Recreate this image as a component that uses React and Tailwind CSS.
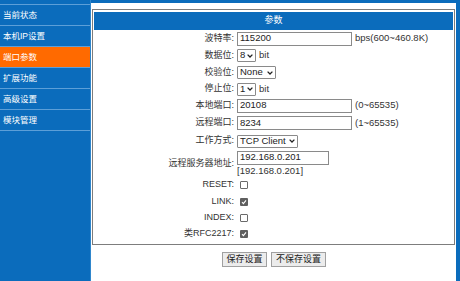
import React from 'react'

const NAV = ['当前状态', '本机IP设置', '端口参数', '扩展功能', '高级设置', '模块管理']

function Chevron() {
  return (
    <svg width="6" height="4" viewBox="0 0 6 4" className="shrink-0">
      <path d="M0.6 0.6 L3 3 L5.4 0.6" fill="none" stroke="#222" strokeWidth="1.3" />
    </svg>
  )
}

function Select({ value, w }) {
  return (
    <div className={`${w} h-[13px] border border-[#8a8a8a] rounded-[1px] bg-white flex items-center justify-between pl-[2px] pr-[2px] text-[9.5px] text-[#222]`}>
      <span>{value}</span>
      <Chevron />
    </div>
  )
}

function Input({ value, w }) {
  return (
    <div className={`${w} h-[14px] border border-[#8a8a8a] bg-white flex items-center pl-[2px] text-[9.5px] text-[#222]`}>
      {value}
    </div>
  )
}

function Check({ on }) {
  return on ? (
    <span className="ml-[3px] w-[8px] h-[8px] rounded-[1px] bg-[#5f5f5f] flex items-center justify-center">
      <svg width="6" height="6" viewBox="0 0 6 6">
        <path d="M1 3.2 L2.4 4.6 L5 1.4" fill="none" stroke="#fff" strokeWidth="1.1" />
      </svg>
    </span>
  ) : (
    <span className="ml-[3px] w-[8px] h-[8px] rounded-[1px] border border-[#6a6a6a] bg-white" />
  )
}

function Row({ label, h, children }) {
  return (
    <div className={`flex items-center ${h}`}>
      <div className="w-[143px] text-right pr-[3px] text-[9px] text-[#333]">{label}</div>
      <div className="flex items-center gap-[3px] text-[9.5px] text-[#333]">{children}</div>
    </div>
  )
}

export default function App() {
  return (
    <div className="w-[460px] h-[281px] flex bg-[#0b6cbc] overflow-hidden font-['Liberation_Sans','Noto_Sans_CJK_SC',sans-serif]">
      {/* 左侧菜单 */}
      <aside className="w-[91px] shrink-0 pt-[4px] border-r border-[#2f86cc]">
        <div className="border-t border-[#5c9fd8]">
          {NAV.map((n) => (
            <div
              key={n}
              className={`h-[21px] border-b border-[#5c9fd8] flex items-center pl-[3px] text-[8.5px] text-white ${n === '端口参数' ? 'bg-[#ff6a00]' : ''}`}
            >
              {n}
            </div>
          ))}
        </div>
      </aside>

      {/* 主区域 */}
      <main className="mt-[3px] w-[365px] shrink-0 bg-white pl-[1px] pt-[6px]">
        <div className="w-[363px] h-[236px] border border-[#7d7d7d] pt-[2px] px-[1px]">
          <div className="h-[18px] bg-[#0b6cbc] flex items-center justify-center text-[9px] text-white">参数</div>

          <Row label="波特率:" h="h-[17px]">
            <Input value="115200" w="w-[115px]" />
            <span>bps(600~460.8K)</span>
          </Row>
          <Row label="数据位:" h="h-[17px]">
            <Select value="8" w="w-[19px]" />
            <span>bit</span>
          </Row>
          <Row label="校验位:" h="h-[17px]">
            <Select value="None" w="w-[39px]" />
          </Row>
          <Row label="停止位:" h="h-[16px]">
            <Select value="1" w="w-[19px]" />
            <span>bit</span>
          </Row>
          <Row label="本地端口:" h="h-[17px]">
            <Input value="20108" w="w-[115px]" />
            <span>(0~65535)</span>
          </Row>
          <Row label="远程端口:" h="h-[18px]">
            <Input value="8234" w="w-[115px]" />
            <span>(1~65535)</span>
          </Row>
          <Row label="工作方式:" h="h-[18px]">
            <Select value="TCP Client" w="w-[61px]" />
          </Row>
          <div className="flex items-center h-[27px]">
            <div className="w-[143px] text-right pr-[3px] text-[9px] text-[#333]">远程服务器地址:</div>
            <div className="flex flex-col text-[9.5px] text-[#333]">
              <Input value="192.168.0.201" w="w-[92px]" />
              <span className="leading-[12px]">[192.168.0.201]</span>
            </div>
          </div>
          <Row label="RESET:" h="h-[16px]"><Check /></Row>
          <Row label="LINK:" h="h-[17px]"><Check on /></Row>
          <Row label="INDEX:" h="h-[16px]"><Check /></Row>
          <Row label="类RFC2217:" h="h-[16px]"><Check on /></Row>
        </div>

        <div className="flex justify-center gap-[4px] mt-[7px]">
          <button className="w-[45px] h-[15px] border border-[#a0a0a0] bg-[#ececec] text-[9px] text-[#222] flex items-center justify-center">保存设置</button>
          <button className="w-[55px] h-[15px] border border-[#a0a0a0] bg-[#ececec] text-[9px] text-[#222] flex items-center justify-center">不保存设置</button>
        </div>
      </main>

      <div className="flex-1" />
    </div>
  )
}
